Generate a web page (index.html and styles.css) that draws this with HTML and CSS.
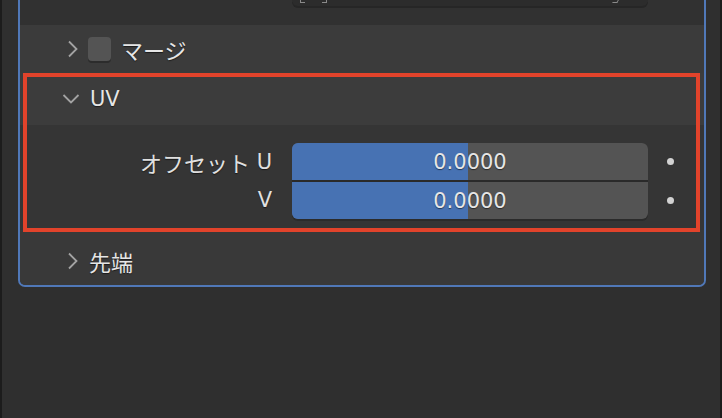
FILE: index.html
```html
<!DOCTYPE html>
<html lang="ja">
<head>
<meta charset="utf-8">
<title>UV</title>
<link rel="stylesheet" href="styles.css">
</head>
<body>
<div class="panel">
  <div class="top">
    <div class="topfield">
      <span class="br br-l"></span><span class="br br-r"></span>
      <span class="tip"></span>
    </div>
  </div>

  <div class="hdr hdr-merge">
    <svg class="chev-r" width="12" height="18" viewBox="0 0 12 18"><path d="M2 1.5 L9.5 9 L2 16.5" fill="none" stroke="#a3a3a3" stroke-width="1.8"/></svg>
    <span class="check"></span>
    <span class="title jp">マージ</span>
  </div>

  <div class="uv">
    <div class="hdr hdr-uv">
      <svg class="chev-d" width="18" height="12" viewBox="0 0 18 12"><path d="M1.5 2 L9 9.5 L16.5 2" fill="none" stroke="#a3a3a3" stroke-width="1.8"/></svg>
      <span class="title">UV</span>
    </div>
    <div class="content">
      <div class="props">
        <div class="labels">
          <div class="lbl"><span class="jp">オフセット</span>&nbsp;U</div>
          <div class="lbl">V</div>
        </div>
        <div class="fields">
          <div class="field"><div class="fill" style="width:49.4%"></div><span class="val">0.0000</span></div>
          <div class="field"><div class="fill" style="width:49.4%"></div><span class="val">0.0000</span></div>
        </div>
        <div class="dots">
          <span class="dot"></span>
          <span class="dot"></span>
        </div>
      </div>
    </div>
  </div>

  <div class="hdr hdr-tip">
    <svg class="chev-r" width="12" height="18" viewBox="0 0 12 18"><path d="M2 1.5 L9.5 9 L2 16.5" fill="none" stroke="#a3a3a3" stroke-width="1.8"/></svg>
    <span class="title jp">先端</span>
  </div>
</div>
</body>
</html>
```

FILE: styles.css
```css
html, body {
  margin: 0;
  padding: 0;
}
body {
  width: 722px;
  height: 418px;
  box-sizing: border-box;
  background: #2f2f2f;
  border-left: 2px solid #1c1c1c;
  border-right: 2px solid #1c1c1c;
  overflow: hidden;
  font-family: "DejaVu Sans", "Noto Sans CJK JP", sans-serif;
  font-size: 21px;
  color: #e6e6e6;
}
.jp {
  font-family: "Noto Sans CJK JP", sans-serif;
  font-size: 22px;
}
.panel {
  margin-left: 16px;
  width: 688px;
  box-sizing: border-box;
  border: 2px solid #5078b8;
  border-top: 0;
  border-radius: 0 0 7px 7px;
  overflow: hidden;
  background: #393939;
}
.top {
  height: 25px;
  background: #313131;
}
.topfield {
  position: relative;
  margin-left: 272px;
  width: 356px;
  height: 6px;
  background: #2c2c2c;
  border-radius: 0 0 6px 6px;
  box-shadow: 0 2px 0 #262626;
}
.br {
  position: absolute;
  top: 0;
  width: 4px;
  height: 2px;
  border-bottom: 1px solid #8a8a8a;
}
.br-l { left: 8px; border-left: 1px solid #8a8a8a; }
.br-r { left: 30px; border-right: 1px solid #8a8a8a; }
.tip {
  position: absolute;
  top: 0;
  left: 321px;
  width: 4px;
  height: 2px;
  border-right: 1px solid #8a8a8a;
  border-bottom: 1px solid #8a8a8a;
  transform: skewX(-30deg);
}
.hdr {
  display: flex;
  align-items: center;
  text-shadow: 0 1px 1px rgba(0,0,0,0.55);
}
.title {
  line-height: 1;
}
.hdr-merge {
  height: 48px;
  background: #3b3b3b;
  padding-left: 47px;
}
.hdr-merge .title {
  margin-left: 10px;
}
.check {
  width: 23px;
  height: 24px;
  margin-left: 9px;
  border-radius: 4px;
  background: #545454;
  box-shadow: 0 2px 0 #2c2c2c;
}
.uv {
  position: relative;
}
.uv::after {
  content: "";
  position: absolute;
  left: 3px;
  right: 4px;
  top: 0;
  bottom: -2px;
  border: 4px solid #e2432b;
  pointer-events: none;
}
.hdr-uv {
  height: 52px;
  background: #3c3c3c;
  padding-left: 42px;
}
.hdr-uv .title {
  margin-left: 10px;
}
.content {
  height: 105px;
  box-sizing: border-box;
  padding-top: 18px;
  background: #353535;
}
.props {
  display: flex;
}
.labels {
  width: 252px;
  display: flex;
  flex-direction: column;
  gap: 1px;
}
.lbl {
  height: 37px;
  display: flex;
  align-items: center;
  justify-content: flex-end;
  color: #e0e0e0;
  text-shadow: 0 1px 1px rgba(0,0,0,0.55);
}
.fields {
  margin-left: 20px;
  width: 356px;
  display: flex;
  flex-direction: column;
  gap: 2px;
  background: #2a2a2a;
  border-radius: 6px;
  overflow: hidden;
  box-shadow: 0 2px 0 #2b2b2b;
}
.field {
  position: relative;
  height: 37px;
  background: #545454;
  display: flex;
  align-items: center;
  justify-content: center;
}
.fill {
  position: absolute;
  left: 0;
  top: 0;
  bottom: 0;
  background: #4772b3;
}
.val {
  position: relative;
  color: #e6e6e6;
  text-shadow: 0 1px 1px rgba(0,0,0,0.5);
}
.dots {
  margin-left: 19px;
  display: flex;
  flex-direction: column;
  gap: 2px;
}
.dots .dot {
  display: block;
  width: 7px;
  height: 7px;
  margin: 15px 0;
  border-radius: 50%;
  background: #d2d2d2;
}
.hdr-tip {
  height: 55px;
  box-sizing: border-box;
  padding-top: 7px;
  background: #393939;
  padding-left: 47px;
}
.hdr-tip .title {
  margin-left: 10px;
}
```
